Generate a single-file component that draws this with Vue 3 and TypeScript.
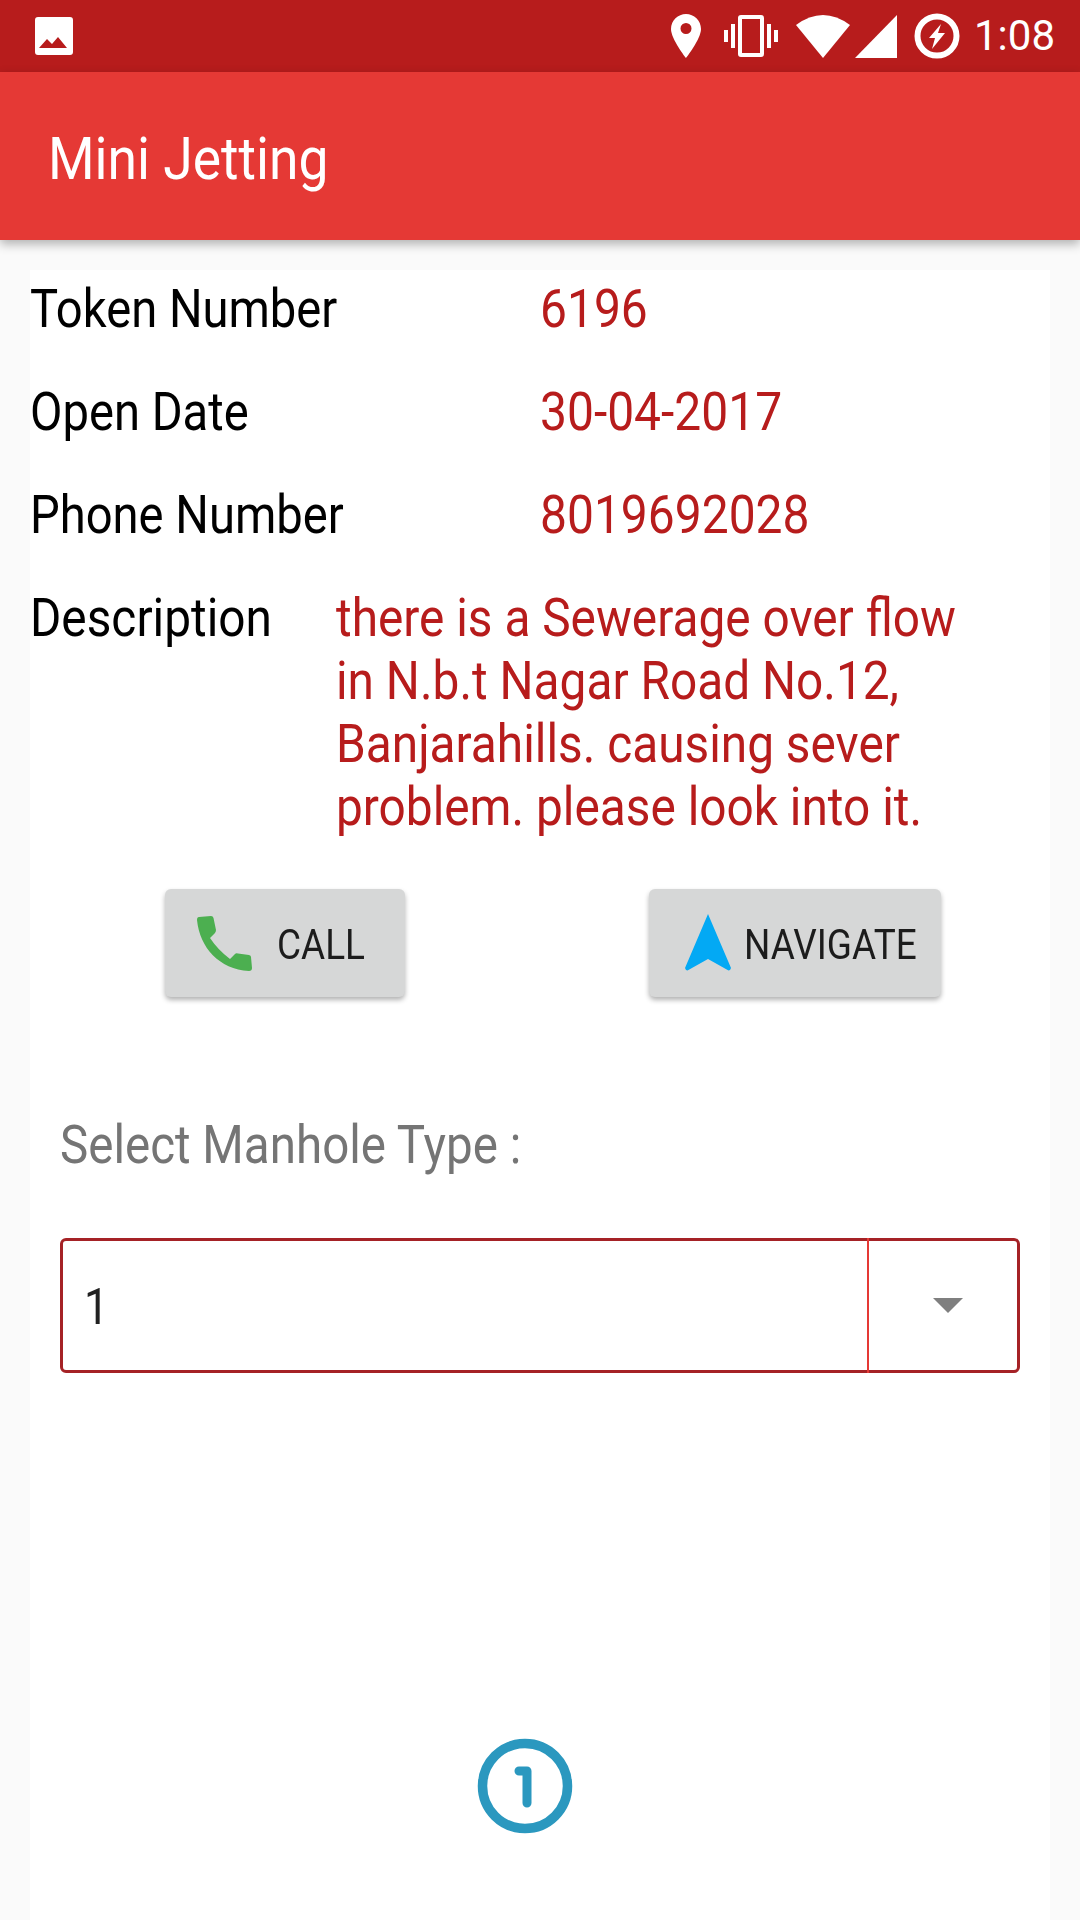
<script setup lang="ts">
const rows = [
  { label: 'Token Number', value: '6196' },
  { label: 'Open Date', value: '30-04-2017' },
  { label: 'Phone Number', value: '8019692028' },
]
const descriptionLines = [
  'there is a Sewerage over flow',
  'in N.b.t Nagar Road No.12,',
  'Banjarahills. causing sever',
  'problem. please look into it.',
]
</script>

<template>
  <div class="screen">
    <div class="status-bar">
      <svg class="image-note" viewBox="0 0 38 38"><path fill="#fff" fill-rule="evenodd" d="M3 0h32a3 3 0 0 1 3 3v32a3 3 0 0 1-3 3H3a3 3 0 0 1-3-3V3a3 3 0 0 1 3-3zM4 31h28L23 20l-6 7-5-5z" /></svg>
      <div class="status-right">
        <svg class="ic-pin" viewBox="0 0 30 44"><path fill="#fff" fill-rule="evenodd" d="M15 0C7 0 0 6.500 0 15c0 10 15 29 15 29s15-19 15-29C30 6.500 23 0 15 0zm0 20a5.500 5.500 0 1 1 0-11 5.500 5.500 0 0 1 0 11z" /></svg>
        <svg class="ic-vibrate" viewBox="0 0 54 42"><path fill="#fff" fill-rule="evenodd" d="M17 0h20a3 3 0 0 1 3 3v36a3 3 0 0 1-3 3H17a3 3 0 0 1-3-3V3a3 3 0 0 1 3-3zm1 4v34h18V4zM0 15h4v12H0zM7 9h4v24H7zM43 9h4v24h-4zM50 15h4v12h-4z" /></svg>
        <svg class="ic-wifi" viewBox="0 0 54 43"><path fill="#fff" d="M27 43L0 10Q27-10 54 10z" /></svg>
        <svg class="ic-signal" viewBox="0 0 42 43"><path fill="#fff" d="M42 0v43H0z" /></svg>
        <svg class="ic-charge" viewBox="0 0 46 46"><circle cx="23" cy="23" r="19.500" fill="none" stroke="#fff" stroke-width="6" /><path fill="#fff" d="M27 11L15 25h6l-3 11 13-16h-7z" /></svg>
        <span class="clock">1:08</span>
      </div>
    </div>

    <header class="app-bar"><span class="app-title">Mini Jetting</span></header>

    <main class="card">
      <div v-for="row in rows" :key="row.label" class="info-row">
        <span class="info-label squeeze">{{ row.label }}</span>
        <span class="info-value squeeze">{{ row.value }}</span>
      </div>

      <div class="desc-row">
        <span class="desc-label squeeze">Description</span>
        <div class="desc-text squeeze">
          <div v-for="line in descriptionLines" :key="line">{{ line }}</div>
        </div>
      </div>

      <div class="actions">
        <button class="btn btn-call">
          <svg class="ic-phone" viewBox="0 0 55 55"><path fill="#4caf50" d="M2 1L14 0Q16 0 16.500 2L19 14Q19 15.500 18 17L13 22Q21 34 33 43L38 38Q39 37 41 37.500L52 39Q54 39.500 54 41L55 52Q55 55 52 55C22 53 3 32 0 4Q0 1 2 1z" /></svg>
          <span class="squeeze">CALL</span>
        </button>
        <button class="btn btn-nav">
          <svg class="ic-nav" viewBox="0 0 46 58"><path fill="#03a9f4" d="M23 0L46 54l-1 2-1.500.5L23 45 2.500 56.500 1 56l-1-2z" /></svg>
          <span class="squeeze">NAVIGATE</span>
        </button>
      </div>

      <div class="manhole-label"><span class="squeeze">Select Manhole Type :</span></div>

      <div class="spinner">
        <div class="spinner-value"><span class="squeeze">1</span></div>
        <div class="spinner-arrow"><i></i></div>
      </div>

      <div class="manhole-figure">
        <svg viewBox="0 0 96 96" class="manhole-icon">
          <circle cx="48" cy="48" r="42.500" fill="none" stroke="#2b98bf" stroke-width="9.500" />
          <path fill="none" stroke="#2b98bf" stroke-width="9" stroke-linecap="round" stroke-linejoin="round" d="M42 33h8v32" />
        </svg>
      </div>
    </main>
  </div>
</template>

<style>
html,
body {
  margin: 0;
  background: #fafafa;
}
</style>

<style scoped>
.screen {
  width: 1080px;
  height: 1920px;
  overflow: hidden;
  background: #fafafa;
  font-family: Roboto, sans-serif;
  display: flex;
  flex-direction: column;
}

/* the reference text is drawn narrow and tall */
.squeeze {
  display: inline-block;
  transform: scaleX(0.88);
  transform-origin: left center;
  white-space: nowrap;
}

.status-bar {
  height: 72px;
  background: #b71c1c;
  display: flex;
  align-items: center;
  justify-content: space-between;
  padding: 0 25px 0 35px;
  flex: none;
  box-sizing: border-box;
}

.image-note {
  width: 38px;
  height: 38px;
}

.status-right {
  display: flex;
  align-items: center;
}

.ic-pin {
  width: 30px;
  height: 44px;
  margin-right: 23px;
}

.ic-vibrate {
  width: 54px;
  height: 42px;
  margin-right: 18px;
}

.ic-wifi {
  width: 54px;
  height: 43px;
  margin-right: 5px;
}

.ic-signal {
  width: 42px;
  height: 43px;
  margin-right: 17px;
}

.ic-charge {
  width: 46px;
  height: 46px;
  margin-right: 14px;
}

.clock {
  color: #fff;
  font-size: 42px;
  line-height: 44px;
}

.app-bar {
  height: 168px;
  flex: none;
  background: #e53935;
  color: #fff;
  font-size: 59px;
  line-height: 174px;
  padding-left: 48px;
  box-sizing: border-box;
  box-shadow: 0 4px 10px rgba(0, 0, 0, 0.3);
  position: relative;
}

.app-title {
  display: inline-block;
  transform: scaleX(0.905);
  transform-origin: left center;
}

.card {
  flex: 1;
  margin: 30px 30px 0;
  background: #fff;
  padding-top: 7px;
}

.info-row {
  display: flex;
  height: 103px;
  font-size: 54px;
  line-height: 64px;
}

.info-label {
  width: 510px;
  color: #000;
  transform: scaleX(0.873);
}

.info-value {
  color: #b71c1c;
  transform: scaleX(0.888);
}

.desc-row {
  display: flex;
  font-size: 54px;
  line-height: 63px;
}

.desc-label {
  width: 306px;
  flex: none;
  color: #000;
  transform: scaleX(0.885);
}

.desc-text {
  color: #b71c1c;
  transform: scaleX(0.885);
}

.actions {
  display: flex;
  margin-top: 51px;
  padding-left: 135px;
}

.btn {
  height: 108px;
  display: flex;
  align-items: center;
  border: none;
  border-radius: 6px;
  background: #d6d7d7;
  box-shadow: 0 3px 5px rgba(0, 0, 0, 0.3);
  color: #1c1c1c;
  font-family: Roboto, sans-serif;
  font-size: 42px;
  padding: 0;
}

.btn span {
  position: relative;
  top: 1px;
}

.btn-call {
  width: 240px;
  padding-left: 32px;
}

.btn-nav {
  width: 292px;
  margin-left: 244px;
  padding-left: 36px;
}

.ic-phone {
  width: 55px;
  height: 55px;
  margin-right: 25px;
  flex: none;
}

.ic-nav {
  width: 46px;
  height: 58px;
  margin-right: 13px;
  flex: none;
}

.manhole-label {
  margin: 116px 0 0 30px;
  font-size: 54px;
  line-height: 64px;
  color: #757575;
}

.spinner {
  margin: 61px 30px 0;
  height: 135px;
  border: 3px solid #a52226;
  border-radius: 6px;
  display: flex;
  box-sizing: border-box;
}

.spinner-value {
  flex: 1;
  padding-left: 21px;
  font-size: 50px;
  line-height: 132px;
  height: 129px;
  color: #212121;
}

.spinner-arrow {
  width: 148px;
  border-left: 2px solid #e53935;
  margin: -3px 0;
  display: flex;
  align-items: center;
  justify-content: center;
}

.spinner-arrow i {
  width: 0;
  height: 0;
  margin-left: 10px;
  border-left: 15px solid transparent;
  border-right: 15px solid transparent;
  border-top: 15px solid #7f7f7f;
}

.manhole-figure {
  display: flex;
  justify-content: center;
  margin-top: 365px;
  padding-right: 30px;
}

.manhole-icon {
  width: 96px;
  height: 96px;
  filter: blur(0.7px);
}
</style>
